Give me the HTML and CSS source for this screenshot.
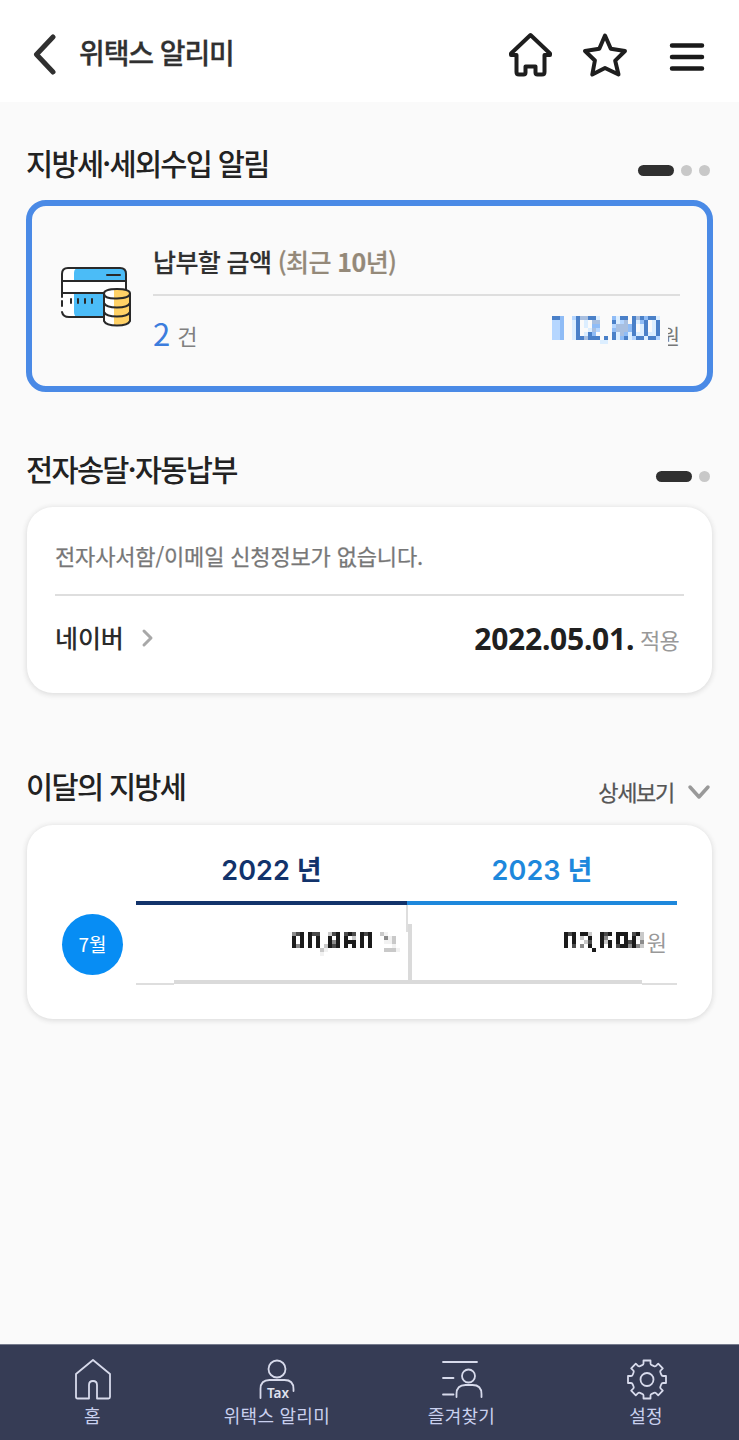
FILE: index.html
```html
<!DOCTYPE html>
<html lang="ko">
<head>
<meta charset="utf-8">
<title>위택스 알리미</title>
<link rel="stylesheet" href="styles.css">
</head>
<body>
<header class="topbar">
  <svg class="back" width="24" height="42" viewBox="0 0 24 42"><path d="M20 3 3.500 20.500 20 38"/></svg>
  <h1 class="title"><span>위택스 알리미</span></h1>
  <svg class="tool home" width="48" height="48" viewBox="0 0 48 48"><path d="M24.500 4 5 22.500V24h5.500v17q0 2.500 2.500 2.500h4.500q2 0 2-2v-6h10v6q0 2 2 2H36q2.500 0 2.500-2.500V24H44v-1.500Z"/></svg>
  <svg class="tool star" width="48" height="48" viewBox="0 0 48 48"><path d="m24 4.500 5.800 13.300L44 20l-9.800 9.700L37.500 43.500 24 37l-12.700 6.500 2.600-14L4 20l14.300-2.200Z"/></svg>
  <svg class="menu" width="36" height="30" viewBox="0 0 36 30"><path d="M3 3.500h30M3 15h30M3 26.500h30"/></svg>
</header>

<main class="content">
  <section class="section notice">
    <div class="head"><h2>지방세·세외수입 알림</h2><div class="dots"><i class="on"></i><i></i><i></i></div></div>
    <div class="card due">
      <svg class="cardicon" width="72" height="62" viewBox="0 0 72 62">
        <path class="white" d="M2 8q0-6 6-6h53q6 0 6 6v38q0 5-6 5H8q-5 0-6-5Z"/>
        <path class="blue" d="M19 2h42q6 0 6 6v7H14V7q0-5 5-5ZM14 28h53v23H18q-4 0-4-5Z"/>
        <path class="line" d="M2 31V8q0-6 6-6h52q6 0 6 6v18M2 15h64M2 27h43M2 35v5M2 46q1 5 7 5h35M47 9h13M11 33v4M18 33v4M25 33v4M32 33v4"/>
        <path class="white" d="M44 27.500q0-4.500 13-4.500t13 4.500V55q-2 4-13 4t-13-4Z"/>
        <path class="gold" d="M54 23q16 0 16 5v27q-2 4-16 4Z"/>
        <path class="line" d="M44 27.500q0-4.500 13-4.500t13 4.500-13 5-13-5V55q2 4.500 13 4.500T70 55V27.500M44 37q2 4.500 13 4.500T70 37M44 46q2 4.500 13 4.500T70 46"/>
      </svg>
      <div class="duebody">
        <div class="duetitle">납부할 금액 <span class="recent">(최근 <b>10</b>년)</span></div>
        <div class="duerow"><span class="count">2</span><span class="unit">건</span>
          <svg class="mosaic amount" width="116" height="32" data-map="due"></svg><span class="won">원</span></div>
      </div>
    </div>
  </section>

  <section class="section delivery">
    <div class="head"><h2>전자송달·자동납부</h2><div class="dots"><i class="on"></i><i></i></div></div>
    <div class="card white-card deliverycard">
      <p class="empty">전자사서함/이메일 신청정보가 없습니다.</p>
      <div class="naver"><span class="name">네이버</span><svg class="next" width="14" height="20" viewBox="0 0 14 20"><path d="m3 3 7 7-7 7"/></svg><span class="date">2022.05.01.</span><span class="apply">적용</span></div>
    </div>
  </section>

  <section class="section monthly">
    <div class="head"><h2>이달의 지방세</h2><div class="detail"><span>상세보기</span><svg width="24" height="18" viewBox="0 0 24 18"><path d="m3 3 9 10 9-10"/></svg></div></div>
    <div class="card white-card monthcard">
      <div class="month">7월</div>
      <div class="years">
        <div class="year y22">2022 년</div><div class="year y23">2023 년</div>
        <div class="cell left"><svg class="mosaic" width="112" height="28" data-map="prev"></svg></div>
        <div class="cell right"><svg class="mosaic" width="80" height="28" data-map="curr"></svg><span>원</span></div>
        <div class="divider"></div>
        <div class="baseline"></div>
      </div>
    </div>
  </section>
</main>

<nav class="tabs">
  <a class="tab"><svg width="48" height="44" viewBox="0 0 48 44"><path d="M7 16 24 2l17 14v23q0 1.500-1.500 1.500H28V27q0-4-4-4t-4 4v13.500H8.500Q7 40.500 7 39Z"/></svg><span>홈</span></a>
  <a class="tab"><svg width="48" height="44" viewBox="0 0 48 44"><circle cx="24" cy="11" r="8.500"/><path d="M7.500 40V31q0-9 9-9h15q9 0 9 9v2"/><text x="14" y="39.500">Tax</text></svg><span>위택스 알리미</span></a>
  <a class="tab"><svg width="48" height="44" viewBox="0 0 48 44"><path d="M5 4h34M5 20h10.500M5 36.500h10.500M18.500 39V36q0-9 9-9h7q9 0 9 9v3"/><circle cx="30.500" cy="18" r="6.500"/></svg><span>즐겨찾기</span></a>
  <a class="tab"><svg width="48" height="44" viewBox="0 0 48 44"><path d="M20.500 2.500h7v3q0 1.200 1.300 1.700l2.200.9q1.200.5 2-.3l2.200-2.100 4.600 4.600-2.100 2.200q-.8.8-.3 2l.9 2.200q.5 1.300 1.700 1.300h3v7h-3q-1.200 0-1.700 1.300l-.9 2.200q-.5 1.200.3 2l2.100 2.200-4.600 4.600-2.200-2.100q-.8-.8-2-.3l-2.200.9q-1.300.5-1.300 1.700v3h-7v-3q0-1.200-1.300-1.700l-2.200-.9q-1.200-.5-2 .3l-2.200 2.100-4.600-4.600 2.100-2.200q.8-.8.3-2l-.9-2.200q-.5-1.300-1.700-1.300H5v-7h3q1.200 0 1.700-1.300l.9-2.200q.5-1.200-.3-2l-2.100-2.200 4.600-4.600L15 7.800q.8.8 2 .3l2.200-.9q1.300-.5 1.300-1.700Z"/><circle cx="24" cy="21.500" r="6.500"/></svg><span>설정</span></a>
</nav>
<script src="mosaic.js"></script>
</body>
</html>
```
FILE: styles.css
```css
* { box-sizing: border-box; }
body {
  margin: 0;
  width: 739px;
  height: 1440px;
  display: flex;
  flex-direction: column;
  overflow: hidden;
  background: #fafafa;
  color: #2b2b2b;
  font-family: "Noto Sans CJK KR", "Noto Sans", sans-serif;
}
svg { display: block; flex: none; fill: none; stroke-linecap: round; stroke-linejoin: round; }
h1, h2, p { margin: 0; }

.topbar { height: 102px; flex: none; background: #fff; display: flex; align-items: center; padding: 8px 35px 0 33px; }
.back { stroke: #303030; stroke-width: 5; }
.title { flex: 1; margin: -6px 0 0 22px; font-size: 28px; line-height: 40px; font-weight: 500; letter-spacing: -1.1px; color: #303030; -webkit-text-stroke: 0.3px #303030; }
.tool { stroke: #1e1e1e; stroke-width: 4; }
.home { margin-right: 27px; }
.star { margin-right: 40px; }
.menu { margin: 3px -1px 0 0; stroke: #1a1a1a; stroke-width: 4.500px; }

.content { flex: 1; padding: 0 26px; }
.head { height: 60px; display: flex; justify-content: space-between; }
.head h2 { margin-top: -2px; font-size: 29.500px; line-height: 44px; font-weight: 500; letter-spacing: -1.700px; color: #222; }
.notice .head { margin-top: 38px; padding-top: 2px; }
.delivery .head { margin-top: 56px; }
.monthly .head { margin-top: 71px; }
.monthly h2 { margin-top: -1px; }
.dots { display: flex; gap: 7px; height: 11px; margin: 23px 3px 0 0; }
.dots i { width: 11px; height: 11px; border-radius: 6px; background: #c8c8c8; }
.dots .on { width: 36px; background: #303030; }

.due { height: 192px; border: 6px solid #4a8ae6; border-radius: 20px; display: flex; padding: 0 27px 0 28px; }
.cardicon { margin-top: 60px; }
.cardicon .white { fill: #fff; }
.cardicon .blue { fill: #4bbcf7; }
.cardicon .gold { fill: #ffd166; }
.cardicon .line { stroke: #292929; stroke-width: 2; }
.duebody { flex: 1; margin-left: 21px; padding-top: 36px; }
.duetitle { height: 54px; border-bottom: 2px solid #dedede; font-size: 25px; line-height: 39px; font-weight: 500; letter-spacing: -0.6px; color: #303030; -webkit-text-stroke: 0.2px; white-space: pre; }
.recent { color: #948979; }
.duerow { display: flex; height: 60px; line-height: 60px; padding-top: 8px; }
.count { margin-top: -1px; font-size: 31px; color: #3c7ddd; }
.unit { font-size: 22px; color: #808080; margin: 1px 0 0 7px; }
.amount { margin: 12px 0 0 auto; position: relative; z-index: 1; background: #fafafa; }
.won { margin: 21px 0 0 -7px; line-height: 20px; font-size: 21px; color: #777; }

.white-card { width: 685px; margin-left: 1px; background: #fff; border-radius: 26px; box-shadow: 0 1px 5px 1px #dedede; }
.deliverycard { height: 186px; margin-top: -1px; padding: 24px 28px 0; }
.empty { height: 65px; border-bottom: 2px solid #dedede; font-size: 22px; line-height: 48px; letter-spacing: -0.15px; color: #777; -webkit-text-stroke: 0.25px #777; }
.naver { display: flex; height: 86px; line-height: 82px; padding-right: 5px; }
.name { font-size: 25px; font-weight: 500; letter-spacing: -0.1px; }
.next { margin: 32px 0 0 17px; stroke: #a8a8a8; stroke-width: 3; }
.date { margin-left: auto; font: bold 30px/85px "Noto Sans", sans-serif; letter-spacing: -0.25px; color: #202020; }
.apply { margin: 2px 0 0 6px; font-size: 22px; color: #999; letter-spacing: -0.8px; }

.detail { display: flex; margin: 8px 2px 0 0; font-size: 22px; line-height: 39px; letter-spacing: -1.3px; color: #555; -webkit-text-stroke: 0.25px #555; }
.detail svg { margin: 12px 0 0 13px; stroke: #999; stroke-width: 3.500px; }
.monthcard { height: 194px; margin-top: 1px; display: flex; padding: 20px 35px 0; }
.month { width: 61px; height: 61px; margin-top: 69px; border-radius: 50%; background: #078df4; color: #fff; text-align: center; font-size: 19px; line-height: 59px; }
.years { width: 541px; height: 144px; margin-left: 13px; display: grid; grid-template-columns: 271px 270px; grid-template-rows: 60px 76px 8px; position: relative; }
.year { text-align: center; font-size: 27px; line-height: 51px; font-weight: 600; letter-spacing: 0.1px; border-bottom: 4px solid; font-family: Inter, "Noto Sans CJK KR", sans-serif; }
.y22 { color: #12336b; }
.y23 { color: #1e88dc; }
.cell { display: flex; justify-content: flex-end; padding: 27px 10px 0 0; font-size: 22px; color: #999; }
.left { border-right: 2px solid #dedede; margin-right: -1px; padding-right: 2px; height: 19px; }
.right span { margin: -8px 0 0 3px; line-height: 34px; }
.divider { position: absolute; left: 272px; top: 79px; width: 4px; height: 57px; background: #dadada; }
.baseline { grid-column: 1 / 3; height: 4px; margin: -1px 35px 0 38px; background: #dadada; position: relative; }
.baseline::before, .baseline::after { content: ""; position: absolute; top: 3px; height: 2px; background: #dedede; }
.baseline::before { left: -38px; width: 38px; }
.baseline::after { right: -35px; width: 35px; }

.tabs { height: 96px; flex: none; display: grid; grid-template-columns: repeat(4, 184.600px); background: #363c55; border-top: 1px solid #767b8d; }
.tab { display: flex; flex-direction: column; align-items: center; padding-top: 13px; color: #c9d0ee; font-size: 18px; line-height: 26px; letter-spacing: 0.25px; }
.tab svg { margin-left: 1px; stroke: #d7daeb; stroke-width: 1.800px; }
.tab text { fill: #e0e3f0; stroke: none; font: 600 13.500px "Noto Sans", sans-serif; letter-spacing: 0; }
```
FILE: mosaic.js
```js
// Masked amounts: one character per 4px block.
const shades = {
  D: '#4a80c8', M: '#8fbcf6', L: '#b5d6ff', G: '#a8bfe0', P: '#dceeff',
  K: '#1b1b1b', k: '#4b4b4b', g: '#8b8b8b', s: '#c9c9c9', w: '#f2f2f2'
};
const maps = {
  due: [
    'DDM..LDGGDDP...MPDD.DGDMDDP',
    'LLM..PD.P.GG...DPLG.DPMD.PD',
    'LLM..PD.P.MM...LGGGMD.PD.PD',
    'LLM..PD..PGL...MGGGMD.PD.PD',
    'LLM..PD.PDM....DPGMPDPPDPPD',
    'LLM..PDDGDDD.D.DPMDPLDDPDDL',
    '............PP.............'
  ],
  prev: [
    'gkK.Kkk..skK.kKk.KkK..sw',
    'K.K.K.K..K.K.K.s.K.K...gws',
    'K.K.K.K..KgK.KKK.K.K...wws',
    'KgK.K.K.sKkK.K.K.K.K.....w',
    '.......sw..............sssw',
    '.......w'
  ],
  curr: [
    'KkK.KKs..KkK.KKK.kKs',
    'K.K.s.K..Kg..K.K.Kws',
    'K.K..sk..KsK.K.KkK.g',
    'K.k.g.K..K.K.kKKgKgs',
    '.......K............'
  ]
};
document.querySelectorAll('.mosaic').forEach(svg => {
  maps[svg.dataset.map].forEach((row, y) => [...row].forEach((code, x) => {
    if (!shades[code]) return;
    const block = document.createElementNS('http://www.w3.org/2000/svg', 'rect');
    block.setAttribute('x', x * 4);
    block.setAttribute('y', y * 4);
    block.setAttribute('width', 4);
    block.setAttribute('height', 4);
    block.setAttribute('fill', shades[code]);
    svg.append(block);
  }));
});
```
